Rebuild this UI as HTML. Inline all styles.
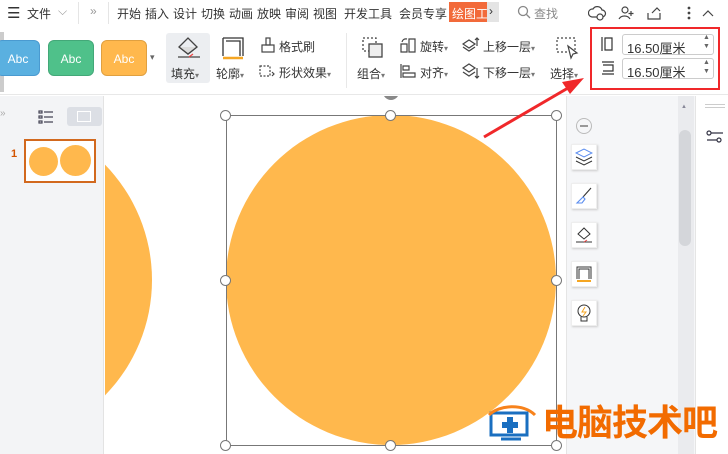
<!DOCTYPE html><html><head><meta charset="utf-8"><style>
*{margin:0;padding:0;box-sizing:border-box}
body{width:728px;height:454px;overflow:hidden;position:relative;background:#fff;font-family:"Liberation Sans","Noto Sans CJK SC",sans-serif;font-size:12px;color:#333}
.a{position:absolute}
.t{position:absolute;white-space:nowrap;font-size:12px}
.btn{position:absolute;width:46px;height:36px;border-radius:6px;color:#fff;font-size:12px;text-align:center;line-height:36px}
.tool{position:absolute;width:26px;height:26px;background:#fff;box-shadow:1px 1px 2px #ccc;border:1px solid #eee}
.h{position:absolute;width:11px;height:11px;border:1px solid #777;border-radius:50%;background:#fff}
</style></head><body>
<div class="a" style="left:0;top:0;width:728px;height:26px;background:#fff"></div>
<div class="t" style="left:7px;top:4px;font-size:15px">☰</div>
<div class="t" style="left:27px;top:5px">文件</div>
<div class="t" style="left:58px;top:4px;color:#999">⌵</div>
<div class="a" style="left:78px;top:2px;width:1px;height:22px;background:#e5e5e5"></div>
<div class="t" style="left:90px;top:4px;color:#999">»</div>
<div class="a" style="left:108px;top:2px;width:1px;height:22px;background:#e5e5e5"></div>
<div class="t" style="left:117px;top:5px">开始</div>
<div class="t" style="left:145px;top:5px">插入</div>
<div class="t" style="left:173px;top:5px">设计</div>
<div class="t" style="left:201px;top:5px">切换</div>
<div class="t" style="left:229px;top:5px">动画</div>
<div class="t" style="left:257px;top:5px">放映</div>
<div class="t" style="left:285px;top:5px">审阅</div>
<div class="t" style="left:313px;top:5px">视图</div>
<div class="t" style="left:344px;top:5px">开发工具</div>
<div class="t" style="left:399px;top:5px">会员专享</div>
<div class="a" style="left:449px;top:2px;width:38px;height:20px;background:#f26a3a"></div>
<div class="t" style="left:452px;top:5px;color:#fff">绘图工</div>
<div class="a" style="left:487px;top:2px;width:12px;height:20px;background:#e4e4e4"></div>
<div class="t" style="left:489px;top:4px">›</div>
<svg class="a" style="left:517px;top:5px" width="14" height="14" fill="none" stroke="#888" stroke-width="1.3"><circle cx="6" cy="6" r="4.5"/><path d="M9.5 9.5l3.5 3.5"/></svg>
<div class="t" style="left:534px;top:5px;color:#888">查找</div>
<svg class="a" style="left:588px;top:3px" width="140" height="20" fill="none" stroke="#444" stroke-width="1.2">
<path d="M4 14a4 4 0 0 1 1-8 5 5 0 0 1 9 1 3 3 0 0 1 0 7z"/><circle cx="12" cy="14" r="3" fill="#fff"/>
<circle cx="37" cy="7" r="3"/><path d="M31 16a6 5 0 0 1 11 0M43 8v5M40.5 10.5h5"/>
<path d="M60 10v6h12v-6M64 10l5-5 3 3"/>
<circle cx="101" cy="5" r=".8" fill="#444"/><circle cx="101" cy="10" r=".8" fill="#444"/><circle cx="101" cy="15" r=".8" fill="#444"/>
<path d="M115 13l5-5 5 5"/></svg>
<div class="a" style="left:0;top:27px;width:728px;height:68px;background:#fff;border-bottom:1px solid #e8e8e8"></div>
<div class="a" style="left:0;top:32px;width:4px;height:60px;background:#ccc"></div>
<div class="btn" style="left:-4px;top:40px;width:44px;background:#5ab0e0;border:1px solid #4a9ad0">Abc</div>
<div class="btn" style="left:48px;top:40px;background:#4fc18a;border:1px solid #43a878">Abc</div>
<div class="btn" style="left:101px;top:40px;background:#ffb84d;border:1px solid #e0a040">Abc</div>
<div class="t" style="left:150px;top:52px;font-size:9px;color:#666">▾</div>
<div class="a" style="left:166px;top:33px;width:44px;height:50px;background:#eceef1;border-radius:3px"></div>
<svg class="a" style="left:175px;top:35px" width="28" height="26" fill="none" stroke="#444" stroke-width="1.3"><path d="M4 12l9-9 9 9-9 7z"/><path d="M4 12l9 7 9-7" fill="#ddd"/><path d="M3 22h22" stroke="#444"/><path d="M14 22l4-3" stroke="#e44"/></svg>
<div class="t" style="left:171px;top:65px">填充<span style="font-size:8px;color:#777">▾</span></div>
<svg class="a" style="left:221px;top:36px" width="24" height="24" fill="none" stroke="#333" stroke-width="1.3"><path d="M2 2h20v18M5 5h14v15M2 2v18"/><path d="M2 22h20" stroke="#f5a623" stroke-width="2.5"/></svg>
<div class="t" style="left:216px;top:65px">轮廓<span style="font-size:8px;color:#777">▾</span></div>
<svg class="a" style="left:261px;top:37px" width="14" height="16" fill="none" stroke="#444" stroke-width="1.2"><rect x="5" y="1" width="4" height="7"/><rect x="1" y="8" width="12" height="7"/></svg>
<div class="t" style="left:279px;top:38px">格式刷</div>
<svg class="a" style="left:259px;top:63px" width="17" height="15" fill="none" stroke="#444" stroke-width="1.2" stroke-dasharray="2 1.5"><path d="M1 3h10v10H1z"/><path d="M13 9l2 2-2 2" stroke-dasharray="none"/></svg>
<div class="t" style="left:279px;top:64px">形状效果<span style="font-size:8px;color:#777">▾</span></div>
<div class="a" style="left:346px;top:33px;width:1px;height:55px;background:#e8e8e8"></div>
<svg class="a" style="left:361px;top:36px" width="24" height="24" fill="none" stroke="#444" stroke-width="1.3"><rect x="2" y="2" width="13" height="13" stroke-dasharray="2 2"/><rect x="8" y="8" width="13" height="13" fill="#eee"/></svg>
<div class="t" style="left:357px;top:65px">组合<span style="font-size:8px;color:#777">▾</span></div>
<svg class="a" style="left:400px;top:37px" width="17" height="16" fill="none" stroke="#444" stroke-width="1.2"><path d="M1 15V7h6v8zM9 15V2h6v13zM2 5a4 4 0 0 1 5-3"/></svg>
<div class="t" style="left:420px;top:38px">旋转<span style="font-size:8px;color:#777">▾</span></div>
<svg class="a" style="left:400px;top:63px" width="17" height="16" fill="none" stroke="#444" stroke-width="1.2"><path d="M1 1v14M3 3h6v4H3zM3 10h12v4H3z"/></svg>
<div class="t" style="left:420px;top:64px">对齐<span style="font-size:8px;color:#777">▾</span></div>
<svg class="a" style="left:462px;top:36px" width="18" height="18" fill="none" stroke="#444" stroke-width="1.2"><path d="M1 8l6-4 6 4-6 4zM1 11l6 4 6-4M15 2v8M13 4l2-2 2 2"/></svg>
<div class="t" style="left:483px;top:38px">上移一层<span style="font-size:8px;color:#777">▾</span></div>
<svg class="a" style="left:462px;top:62px" width="18" height="18" fill="none" stroke="#444" stroke-width="1.2"><path d="M1 6l6-4 6 4-6 4zM1 10l6 4 6-4M15 6v10M13 14l2 2 2-2"/></svg>
<div class="t" style="left:483px;top:64px">下移一层<span style="font-size:8px;color:#777">▾</span></div>
<svg class="a" style="left:555px;top:36px" width="26" height="24" fill="none" stroke="#444" stroke-width="1.2"><rect x="2" y="2" width="18" height="14" stroke-dasharray="2 2"/><path d="M13 10l9 7-4 1-2 4z" fill="#fff"/></svg>
<div class="t" style="left:550px;top:65px">选择<span style="font-size:8px;color:#777">▾</span></div>
<div class="a" style="left:590px;top:27px;width:130px;height:63px;border:2px solid #f0282a"></div>
<svg class="a" style="left:600px;top:36px" width="16" height="42" fill="none" stroke="#333" stroke-width="1.2"><path d="M2 1v14M5 2h7v12H5z"/><path d="M2 26h12M2 38h12M3 29h10v6H3"/></svg>
<div class="a" style="left:622px;top:34px;width:92px;height:21px;border:1px solid #ccc;border-radius:3px"></div>
<div class="t" style="left:627px;top:38px;font-size:13px">16.50厘米</div>
<div class="t" style="left:703px;top:33px;font-size:7px;color:#666;line-height:9px">▲<br>▼</div>
<div class="a" style="left:622px;top:58px;width:92px;height:21px;border:1px solid #ccc;border-radius:3px"></div>
<div class="t" style="left:627px;top:62px;font-size:13px">16.50厘米</div>
<div class="t" style="left:703px;top:58px;font-size:7px;color:#666;line-height:9px">▲<br>▼</div>
<div class="a" style="left:0;top:96px;width:104px;height:358px;background:#f3f4f6;border-right:1px solid #e3e3e3"></div>
<div class="t" style="left:0;top:108px;color:#aaa;font-size:10px">»</div>
<svg class="a" style="left:38px;top:110px" width="16" height="14" fill="none" stroke="#445" stroke-width="1.2"><rect x="1" y="1" width="3" height="2"/><rect x="1" y="6" width="3" height="2"/><rect x="1" y="11" width="3" height="2"/><path d="M6 2h9M6 7h9M6 12h9"/></svg>
<div class="a" style="left:67px;top:107px;width:35px;height:19px;background:#dcdfe5;border-radius:3px"></div>
<div class="a" style="left:77px;top:111px;width:14px;height:11px;border:1px solid #fff"></div>
<div class="t" style="left:11px;top:148px;color:#d35400;font-weight:bold;font-size:11px">1</div>
<div class="a" style="left:24px;top:139px;width:72px;height:44px;border:2px solid #d2691e;background:#fff"></div>
<div class="a" style="left:29px;top:147px;width:29px;height:29px;border-radius:50%;background:#ffb84d"></div>
<div class="a" style="left:60px;top:145px;width:31px;height:31px;border-radius:50%;background:#ffb84d"></div>
<div class="a" style="left:105px;top:96px;width:461px;height:358px;overflow:hidden;background:#fff">
<div class="a" style="left:-283px;top:19px;width:330px;height:330px;border-radius:50%;background:#ffb84d"></div>
<div class="a" style="left:121px;top:19px;width:330px;height:330px;border-radius:50%;background:#ffb84d"></div>
<div class="a" style="left:121px;top:19px;width:331px;height:331px;border:1px solid #777"></div>
<div class="a" style="left:278px;top:-6px;width:16px;height:10px;border-radius:0 0 8px 8px;background:#888"></div>
</div>
<div class="h" style="left:385px;top:110px"></div><div class="h" style="left:220px;top:110px"></div><div class="h" style="left:551px;top:110px"></div>
<div class="h" style="left:220px;top:275px"></div><div class="h" style="left:551px;top:275px"></div>
<div class="h" style="left:220px;top:440px"></div><div class="h" style="left:385px;top:440px"></div><div class="h" style="left:551px;top:440px"></div>
<svg class="a" style="left:0;top:0" width="728" height="454"><path d="M484 137L568 88" stroke="#f0282a" stroke-width="3"/><path d="M584 78l-22 4 8 12z" fill="#f0282a"/></svg>
<div class="a" style="left:566px;top:96px;width:129px;height:358px;background:#f5f6f8;border-left:1px solid #e5e5e5"></div>
<div class="a" style="left:678px;top:96px;width:16px;height:358px;background:#eaebee"></div>
<div class="a" style="left:679px;top:130px;width:12px;height:116px;background:#d4d6da;border-radius:6px"></div>
<div class="t" style="left:681px;top:104px;font-size:6px;color:#889">▲</div>
<div class="a" style="left:695px;top:96px;width:33px;height:358px;background:#fff;border-left:1px solid #e5e5e5"></div>
<div class="a" style="left:705px;top:104px;width:20px;height:1px;background:#ccc"></div><div class="a" style="left:705px;top:107px;width:20px;height:1px;background:#ccc"></div>
<svg class="a" style="left:706px;top:130px" width="20" height="16" fill="none" stroke="#334" stroke-width="1.2"><circle cx="3" cy="3" r="2"/><path d="M5 3h12M1 10h10"/><circle cx="13" cy="10" r="2"/></svg>
<div class="a" style="left:576px;top:118px;width:16px;height:16px;border:1px solid #bbb;border-radius:50%"></div>
<div class="a" style="left:580px;top:125px;width:8px;height:2px;background:#999"></div>
<div class="tool" style="left:571px;top:144px"></div>
<svg class="a" style="left:575px;top:148px" width="18" height="18" fill="none" stroke-width="1"><path d="M1 5l8-4 8 4-8 4z" stroke="#5b8def"/><path d="M1 9l8 4 8-4M1 13l8 4 8-4" stroke="#333"/></svg>
<div class="tool" style="left:571px;top:183px"></div>
<svg class="a" style="left:575px;top:187px" width="18" height="18" fill="none" stroke-width="1.1"><path d="M16 1l-8 9" stroke="#333"/><path d="M8 10l-6 6h5l3-4z" stroke="#5b8def"/></svg>
<div class="tool" style="left:571px;top:222px"></div>
<svg class="a" style="left:575px;top:226px" width="18" height="18" fill="none" stroke="#333" stroke-width="1"><path d="M3 8l6-6 6 6-6 5z"/><path d="M1 16h16"/><path d="M9 16l3-2" stroke="#e44"/></svg>
<div class="tool" style="left:571px;top:261px"></div>
<svg class="a" style="left:575px;top:265px" width="18" height="18" fill="none" stroke="#333" stroke-width="1"><path d="M2 14V2h14v12M4 14V4h10v10"/><path d="M2 16h14" stroke="#f5a623" stroke-width="2"/></svg>
<div class="tool" style="left:571px;top:300px"></div>
<svg class="a" style="left:575px;top:304px" width="18" height="18" fill="none" stroke="#333" stroke-width="1"><circle cx="9" cy="7" r="6"/><path d="M6 13v4h6v-4"/><path d="M10 3l-3 5h4l-3 4" stroke="#f5a623"/></svg>
<svg class="a" style="left:487px;top:405px" width="52" height="40"><path d="M4 8h36v22H4z" fill="none" stroke="#1a6fc0" stroke-width="3"/><path d="M14 34h20" stroke="#1a6fc0" stroke-width="3"/><path d="M20 12h6v5h5v6h-5v5h-6v-5h-5v-6h5z" fill="#1a6fc0"/><path d="M2 10C12 0 36 -2 48 10" fill="none" stroke="#f7821b" stroke-width="3"/></svg>
<div class="t" style="left:542px;top:401px;font-size:36px;font-weight:bold;color:#f26b00;letter-spacing:-1px;line-height:44px">电脑技术吧</div>
</body></html>
